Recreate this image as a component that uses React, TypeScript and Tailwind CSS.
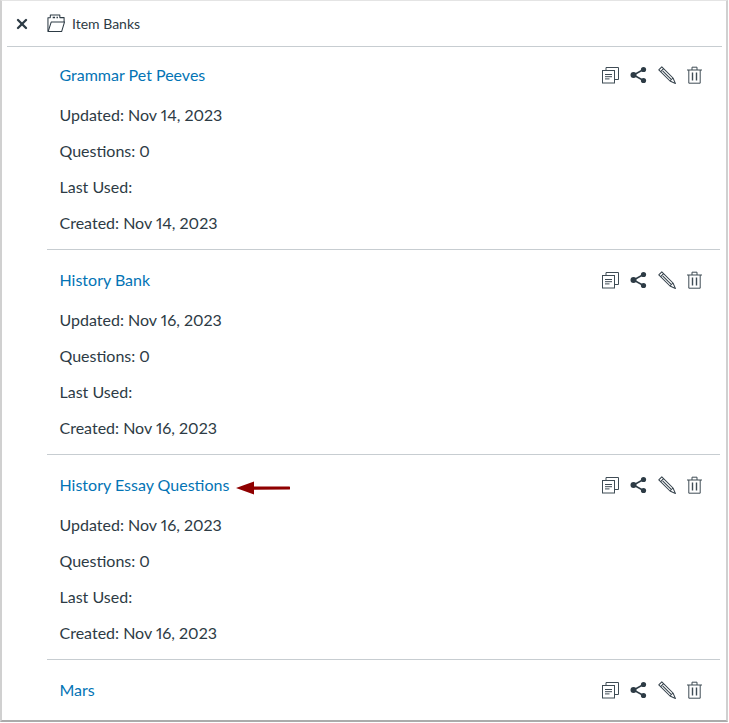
import { X } from 'lucide-react';

const banks = [
  { name: 'Grammar Pet Peeves', updated: 'Nov 14, 2023', created: 'Nov 14, 2023' },
  { name: 'History Bank', updated: 'Nov 16, 2023', created: 'Nov 16, 2023' },
  { name: 'History Essay Questions', updated: 'Nov 16, 2023', created: 'Nov 16, 2023', arrow: true },
];

function CopyIcon() {
  return (
    <svg width="18" height="18" viewBox="0 0 18 18" fill="none" stroke="#3f4c55" strokeWidth="1">
      <rect x="0.5" y="4.5" width="12" height="12.5" fill="white" />
      <path d="M4 4.5V1.5H16.5V13.5H12.5" />
      <path d="M3 8.5h7M3 10.7h7M3 12.9h4.5" />
    </svg>
  );
}

function ShareIcon() {
  return (
    <svg width="18" height="18" viewBox="0 0 18 18" fill="#2d3b45" stroke="#2d3b45">
      <path d="M13.5 3.5L3.5 9l10 5.5" fill="none" strokeWidth="1.5" />
      <circle cx="13.5" cy="3.5" r="2.6" stroke="none" />
      <circle cx="3.5" cy="9" r="3" stroke="none" />
      <circle cx="13.5" cy="14.5" r="2.6" stroke="none" />
    </svg>
  );
}

function PencilIcon() {
  return (
    <svg width="18" height="18" viewBox="0 0 18 18" fill="none" stroke="#35424c" strokeWidth="1.05" strokeLinejoin="round">
      <path d="M0.8 3.8L3.8 0.8 15 12l2.4 5.4-5.4-2.4z" />
      <path d="M2.6 5.6l3-3M12 15l3-3" />
      <path d="M4.6 4.8l8.6 8.6" />
    </svg>
  );
}

function TrashIcon() {
  return (
    <svg width="18" height="18" viewBox="0 0 18 18" fill="none" stroke="#3f4c55" strokeWidth="1">
      <path d="M1 4h15M6 4V1.2h5V4" />
      <path d="M2.8 4v13.2h11.4V4" />
      <path d="M6.5 6.5V14.5M10.5 6.5V14.5" strokeWidth="1.4" />
    </svg>
  );
}

function Actions() {
  return (
    <div className="flex items-center gap-[10px]">
      <CopyIcon />
      <ShareIcon />
      <PencilIcon />
      <TrashIcon />
    </div>
  );
}

function BankIcon() {
  return (
    <svg width="19" height="19" viewBox="0 0 20 20" fill="none" stroke="#2d3b45" strokeWidth="1.1" strokeLinejoin="round">
      <path d="M1 18.5V4l2.5-.2V1h10v2.8H18v4.7" />
      <path d="M1.2 18.5h14.2l3-10H4.4z" />
      <path d="M6 3.6h2.5M10 3.6h1.5" strokeWidth="1.6" />
    </svg>
  );
}

export default function App() {
  return (
    <div className="w-[729px] h-[723px] bg-white overflow-hidden" style={{ fontFamily: 'Lato, sans-serif' }}>
      <div className="w-[728px] h-[722px] border-x-2 border-b-2 border-t border-x-[#d0d0d0] border-t-[#e4e4e4] border-b-[#ababab] overflow-hidden pl-[5px] pr-[4px]">
        {/* Header */}
        <div className="h-[46px] flex items-center border-b border-[#c7cdd1]">
          <X className="w-[16px] h-[16px] ml-[7px] text-[#2d3b45]" strokeWidth={3.5} />
          <div className="ml-[17px]">
            <BankIcon />
          </div>
          <span className="ml-[6px] text-[14px] text-[#2d3b45]">Item Banks</span>
        </div>

        {/* Banks */}
        <div className="pl-[40px] pr-[2px]">
          {banks.map((bank) => (
            <div key={bank.name} className="h-[205px] first:h-[203px] border-b border-[#c7cdd1] pt-[18px] first:pt-[16px]">
              <div className="flex items-center justify-between h-[24px] pl-[12.5px] pr-[16px]">
                <div className="flex items-center">
                  <a className="text-[16px] text-[#0374b5]">{bank.name}</a>
                  {bank.arrow && (
                    <svg className="ml-[7px] mt-[5px]" width="54" height="16" viewBox="0 0 54 16">
                      <path d="M0 8L18 1.5V6.5L53 6.5a1.3 1.3 0 0 1 0 3L18 9.8V14.5z" fill="#8f0000" />
                    </svg>
                  )}
                </div>
                <Actions />
              </div>
              <div className="pl-[12.5px] mt-[10px] text-[16px] leading-[36px] text-[#2d3b45] proportional-nums">
                <p>Updated: {bank.updated}</p>
                <p>Questions: 0</p>
                <p>Last Used:</p>
                <p>Created: {bank.created}</p>
              </div>
            </div>
          ))}
          <div className="pt-[18px]">
            <div className="flex items-center justify-between h-[24px] pl-[12.5px] pr-[16px]">
              <a className="text-[16px] text-[#0374b5]">Mars</a>
              <Actions />
            </div>
          </div>
        </div>
      </div>
    </div>
  );
}
